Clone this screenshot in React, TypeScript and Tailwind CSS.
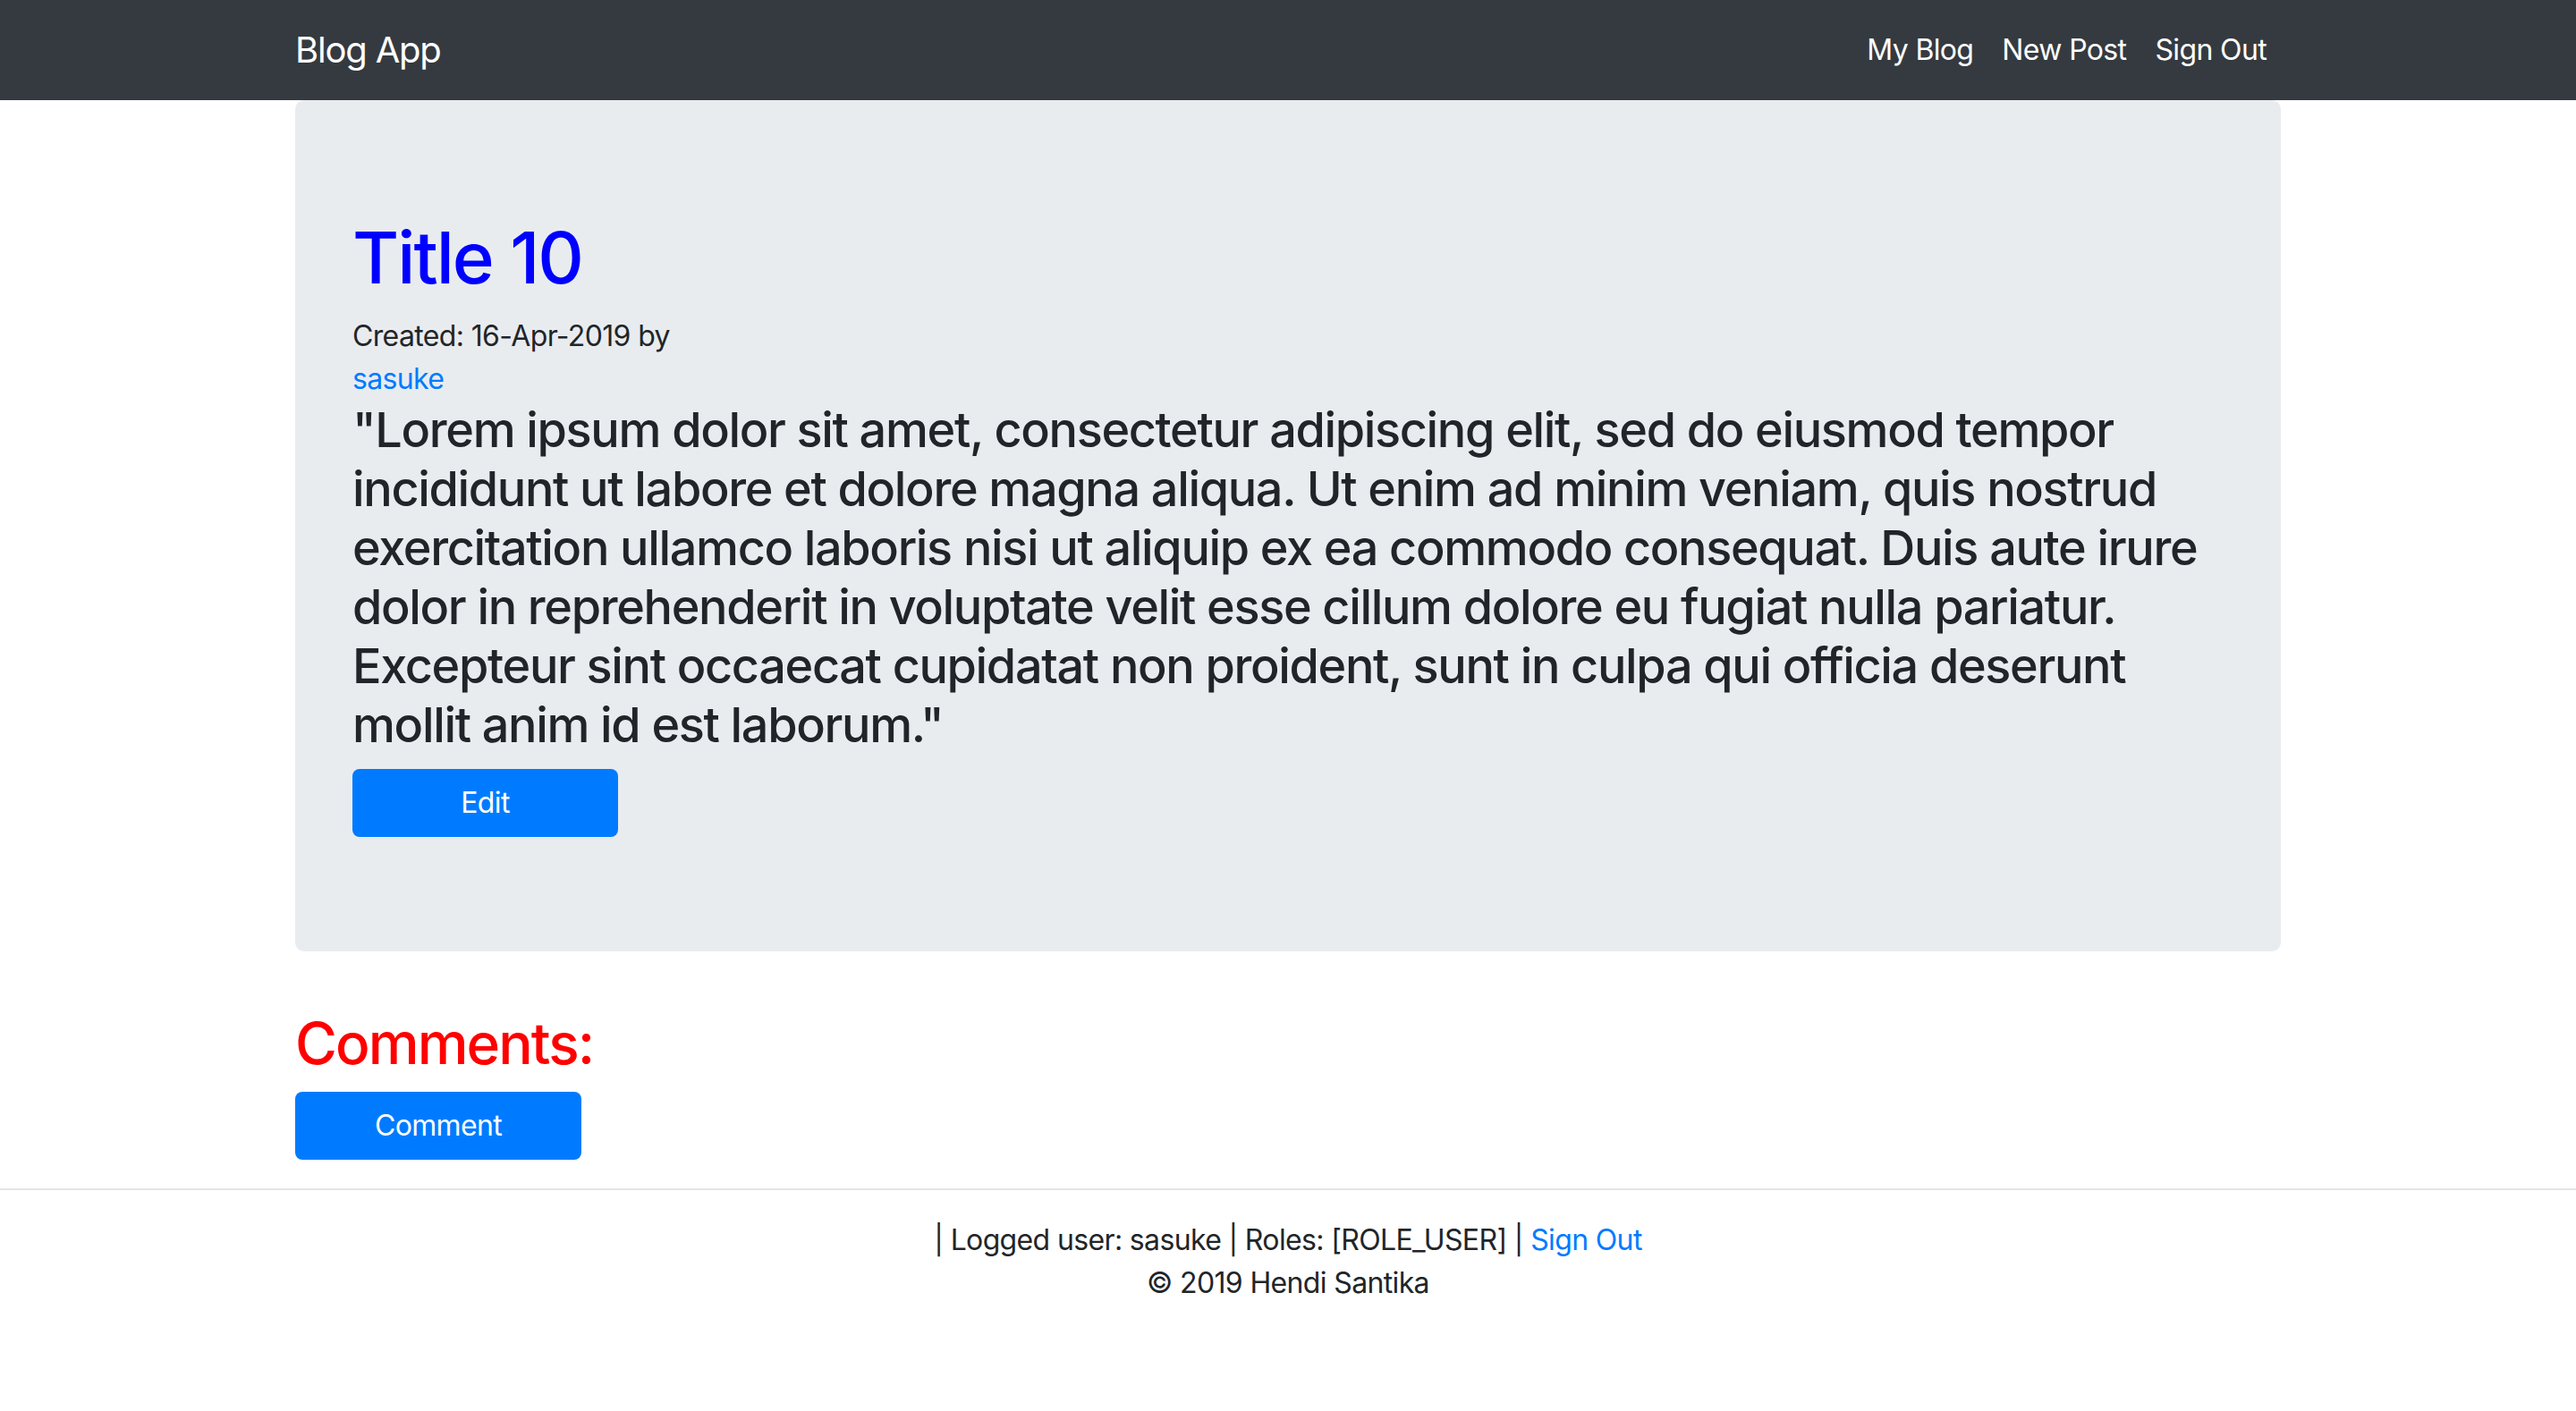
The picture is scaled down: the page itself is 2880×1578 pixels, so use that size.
import React from "react";

const lorem =
  '"Lorem ipsum dolor sit amet, consectetur adipiscing elit, sed do eiusmod tempor incididunt ut labore et dolore magna aliqua. Ut enim ad minim veniam, quis nostrud exercitation ullamco laboris nisi ut aliquip ex ea commodo consequat. Duis aute irure dolor in reprehenderit in voluptate velit esse cillum dolore eu fugiat nulla pariatur. Excepteur sint occaecat cupidatat non proident, sunt in culpa qui officia deserunt mollit anim id est laborum."';

const App: React.FC = () => {
  return (
    <div className="min-h-screen bg-white font-['Inter',sans-serif] text-[#212529] text-[32px] leading-[48px] tracking-[-0.02em]">
      <nav className="bg-[#343a40]">
        <div className="w-[2280px] mx-auto px-[30px] h-[112px] flex items-center justify-between">
          <a href="#" className="text-white text-[40px] leading-[60px] tracking-[-0.03em]">
            Blog App
          </a>
          <ul className="flex items-center">
            {["My Blog", "New Post", "Sign Out"].map((item) => (
              <li key={item}>
                <a href="#" className="block px-4 py-4 text-white">
                  {item}
                </a>
              </li>
            ))}
          </ul>
        </div>
      </nav>

      <main className="w-[2280px] mx-auto px-[30px]">
        <section className="bg-[#e9ecef] rounded-[10px] px-16 py-32 mb-16">
          <h1 className="text-[80px] leading-[96px] font-medium text-[#0000ff] tracking-[-0.025em] mb-4">
            Title 10
          </h1>
          <div>Created: 16-Apr-2019 by</div>
          <a href="#" className="block text-[#007bff]">
            sasuke
          </a>
          <h3 className="text-[54px] leading-[66px] font-medium tracking-[-0.025em]">{lorem}</h3>
          <button className="mt-4 w-[297px] h-[76px] rounded-lg bg-[#007bff] text-white">
            Edit
          </button>
        </section>

        <h2 className="text-[64px] leading-[77px] font-medium text-[#ff0000] tracking-[-0.03em] mb-4">
          Comments:
        </h2>
        <button className="w-[320px] h-[76px] rounded-lg bg-[#007bff] text-white">
          Comment
        </button>
      </main>

      <footer className="mt-8 border-t-2 border-[#e5e5e5] pt-8 text-center">
        <div>
          | Logged user: sasuke | Roles: [ROLE_USER] |{" "}
          <a href="#" className="text-[#007bff]">
            Sign Out
          </a>
        </div>
        <div>© 2019 Hendi Santika</div>
      </footer>
    </div>
  );
};

export default App;
